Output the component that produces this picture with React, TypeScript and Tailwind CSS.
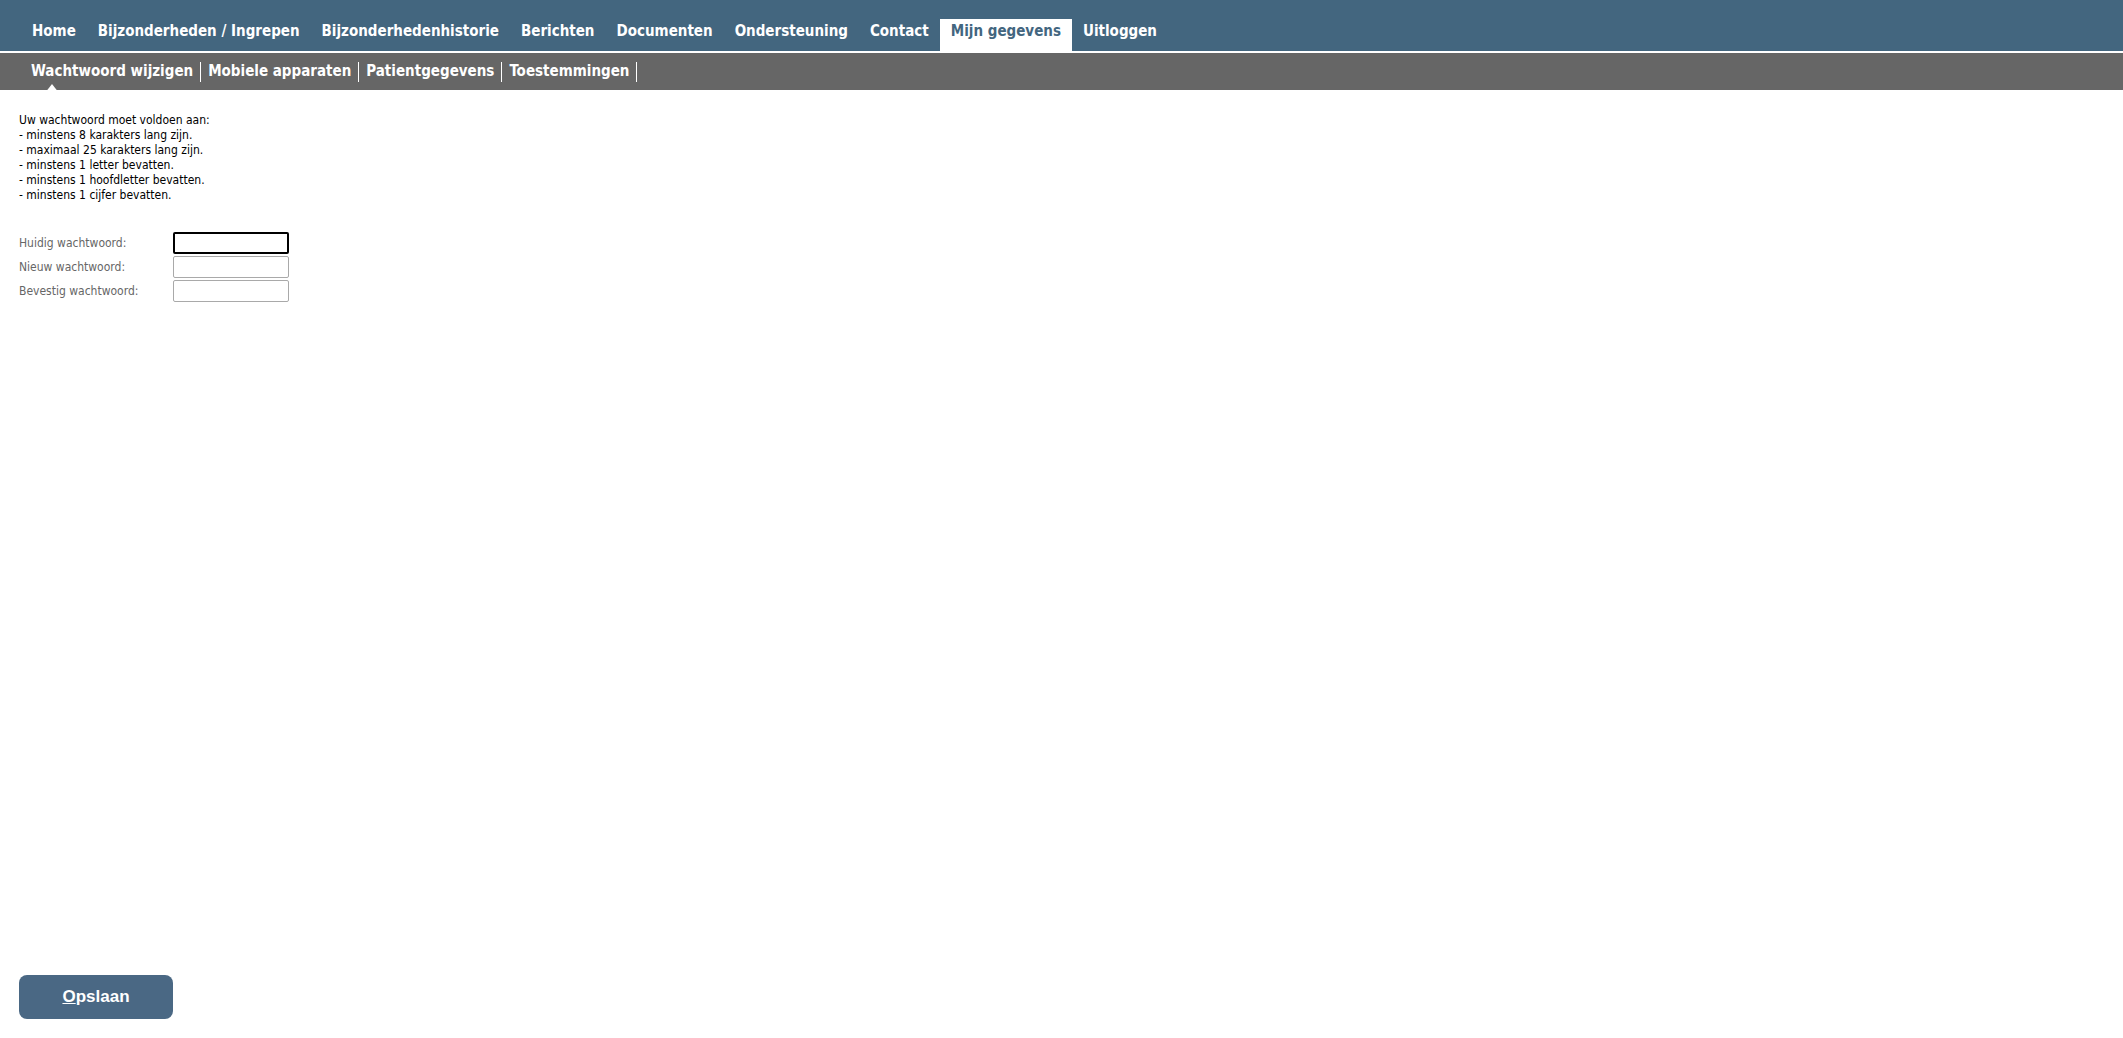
const main = ['Home', 'Bijzonderheden / Ingrepen', 'Bijzonderhedenhistorie', 'Berichten', 'Documenten', 'Ondersteuning', 'Contact', 'Mijn gegevens', 'Uitloggen'];
const sub = ['Wachtwoord wijzigen', 'Mobiele apparaten', 'Patientgegevens', 'Toestemmingen'];
const rules = [
  'Uw wachtwoord moet voldoen aan:',
  '- minstens 8 karakters lang zijn.',
  '- maximaal 25 karakters lang zijn.',
  '- minstens 1 letter bevatten.',
  '- minstens 1 hoofdletter bevatten.',
  '- minstens 1 cijfer bevatten.',
];
const fields = ['Huidig wachtwoord:', 'Nieuw wachtwoord:', 'Bevestig wachtwoord:'];

export default function App() {
  return (
    <div className="min-h-[1038px] flex flex-col bg-white" style={{ fontFamily: '"DejaVu Sans Condensed", "DejaVu Sans", sans-serif' }}>
      <div className="h-px bg-[#43667f]" />
      <div className="h-[52px] bg-[#43667f] flex items-end pl-[21px] border-b-2 border-white">
        {main.map((m) => (
          <div
            key={m}
            className={`h-[32px] px-[11px] flex items-center pb-[10px] pt-[2px] text-[15px] font-bold ${m === 'Mijn gegevens' ? 'bg-white text-[#43667f]' : 'text-white'}`}
          >
            {m}
          </div>
        ))}
      </div>
      <div className="h-[37px] bg-[#666666] flex items-center pl-[31px]">
        {sub.map((s, i) => (
          <div key={s} className="relative flex items-center text-white text-[15px] font-bold">
            <span className={i === 0 ? 'pr-[7px]' : 'px-[7px]'}>{s}</span>
            <span className="w-px h-[20px] bg-white" />
            {i === 0 && (
              <span className="absolute left-[14px] top-[24px] w-0 h-0 border-l-[7px] border-r-[7px] border-b-[9px] border-l-transparent border-r-transparent border-b-white" />
            )}
          </div>
        ))}
      </div>
      <div className="pl-[19px] pt-[23px] text-[12px] leading-[15px] text-black">
        {rules.map((r) => (
          <div key={r}>{r}</div>
        ))}
      </div>
      <div className="pl-[19px] pt-[29px] flex flex-col gap-[2px]">
        {fields.map((f, i) => (
          <div key={f} className="flex items-center h-[22px]">
            <span className="w-[154px] text-[12px] text-[#666666]">{f}</span>
            <input
              type="password"
              className={`w-[116px] h-[22px] bg-white outline-none rounded-[2px] ${i === 0 ? 'border-2 border-black' : 'border border-[#a9a9a9]'}`}
            />
          </div>
        ))}
      </div>
      <div className="flex-1" />
      <div className="pl-[19px] pb-[19px]">
        <button className="w-[154px] h-[44px] rounded-[8px] bg-[#4a6884] text-white text-[17px] font-bold" style={{ fontFamily: '"Liberation Sans", Arial, sans-serif' }}>
          <span className="underline">O</span>pslaan
        </button>
      </div>
    </div>
  );
}
